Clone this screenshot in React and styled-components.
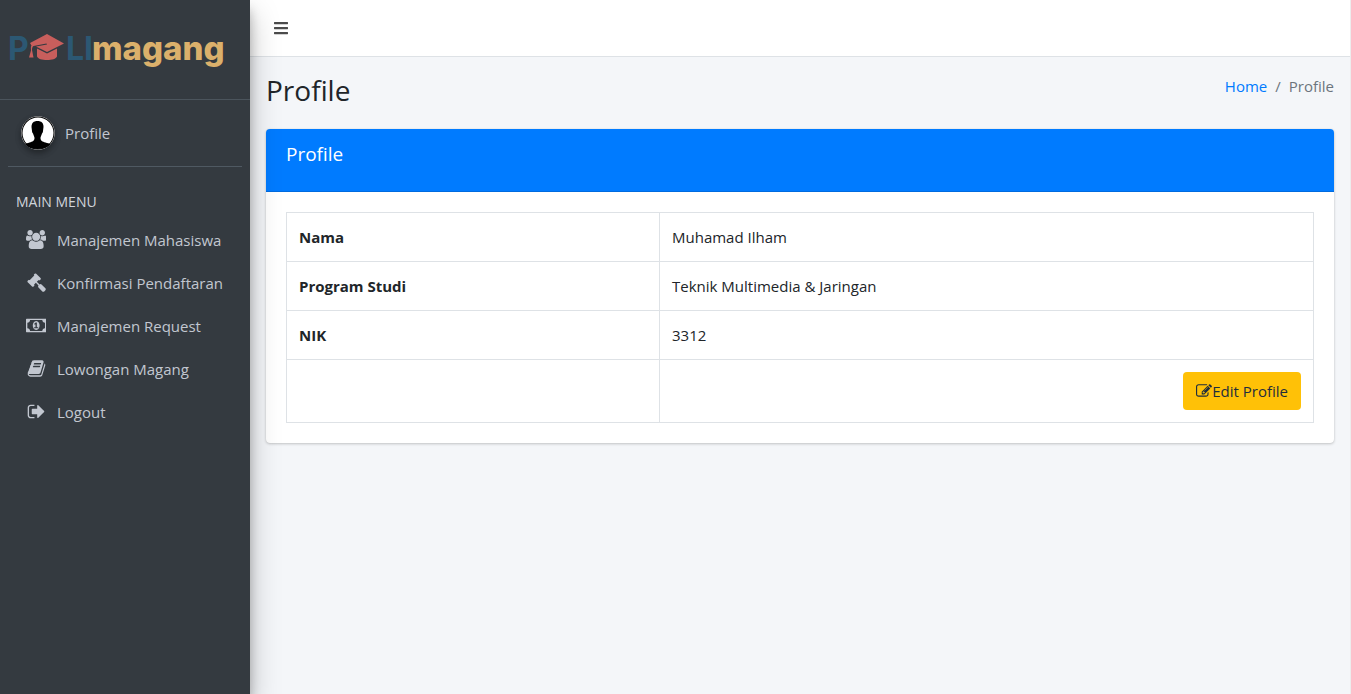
import React from "react";
import styled, { createGlobalStyle } from "styled-components";
import { FaBars } from "react-icons/fa";

const GlobalStyle = createGlobalStyle`
  *, *::before, *::after { box-sizing: border-box; }
  body {
    margin: 0;
    background: #f4f6f9;
    color: #212529;
    font-family: "Open Sans", "Noto Sans", sans-serif;
    font-size: 15px;
    line-height: 24px;
  }
`;

const Shell = styled.div`
  display: flex;
  min-height: 100vh;
  border-right: 1px solid #ededed;
`;

const Sidebar = styled.aside`
  flex: 0 0 250px;
  background: #343a40;
  color: #c2c7d0;
  z-index: 1;
  box-shadow: 0 14px 28px rgba(0, 0, 0, 0.25), 0 10px 10px rgba(0, 0, 0, 0.22);
`;

const Brand = styled.a`
  display: block;
  height: 100px;
  padding: 28px 8px;
  border-bottom: 1px solid #4b545c;
  svg { display: block; }
`;

const UserPanel = styled.a`
  display: flex;
  align-items: center;
  gap: 10px;
  height: 67px;
  margin: 0 8px;
  padding: 0 13px;
  border-bottom: 1px solid #4f5962;
  color: inherit;
  text-decoration: none;
`;

const Avatar = styled.svg`
  width: 34px;
  height: 34px;
  border-radius: 50%;
  box-shadow: 0 3px 6px rgba(0, 0, 0, 0.16), 0 3px 6px rgba(0, 0, 0, 0.23);
`;

const MenuTitle = styled.h2`
  margin: 0;
  padding: 23px 16px 6px;
  font-size: 14px;
  font-weight: 400;
  line-height: 24px;
  color: #d0d4db;
`;

const Menu = styled.ul`
  display: flex;
  flex-direction: column;
  gap: 3px;
  margin: 0;
  padding: 0 8px;
  list-style: none;
`;

const MenuLink = styled.a`
  display: flex;
  align-items: center;
  gap: 8px;
  height: 40px;
  padding: 0 15px;
  color: inherit;
  text-decoration: none;
  white-space: nowrap;
`;

const IconBox = styled.span`
  display: flex;
  justify-content: center;
  width: 26px;
  padding-bottom: 2px;
`;

const Glyph = styled.svg`
  display: block;
  height: ${(p) => p.$size}px;
  fill: currentColor;
`;

const Main = styled.div`
  flex: 1;
  min-width: 0;
`;

const Topbar = styled.header`
  display: flex;
  align-items: center;
  height: 57px;
  padding: 0 8px;
  background: #fff;
  border-bottom: 1px solid #dee2e6;
`;

const Toggle = styled.button`
  display: flex;
  padding: 8px 15px;
  border: 0;
  background: none;
  color: #4b4b4b;
  font-size: 16px;
`;

const PageHead = styled.div`
  display: flex;
  justify-content: space-between;
  padding: 15px 16px 0;
  height: 72px;
`;

const PageTitle = styled.h1`
  margin: 0;
  font-size: 28px;
  font-weight: 400;
  line-height: 36px;
`;

const Crumbs = styled.nav`
  display: flex;
  gap: 8px;
  padding-top: 2px;
  color: #6c757d;
  a { color: #007bff; text-decoration: none; }
`;

const Card = styled.section`
  margin: 0 16px;
  border-radius: 4px;
  background: #fff;
  box-shadow: 0 0 1px rgba(0, 0, 0, 0.125), 0 1px 3px rgba(0, 0, 0, 0.2);
`;

const CardHead = styled.div`
  height: 63px;
  padding: 12px 20px;
  border-bottom: 1px solid rgba(0, 0, 0, 0.125);
  border-radius: 4px 4px 0 0;
  background: #007bff;
  color: #fff;
`;

const CardTitle = styled.h2`
  margin: 0;
  font-size: 19px;
  font-weight: 400;
  line-height: 26px;
`;

const CardBody = styled.div`
  padding: 20px;
`;

const Table = styled.table`
  width: 100%;
  border-collapse: collapse;
  table-layout: fixed;
  th, td {
    padding: 12px;
    border: 1px solid #dee2e6;
    text-align: left;
    vertical-align: top;
  }
  th { width: 373px; font-weight: 700; }
`;

const Actions = styled.div`
  display: flex;
  justify-content: flex-end;
`;

const EditButton = styled.button`
  display: flex;
  align-items: center;
  height: 38px;
  padding: 0 13px;
  border: 0;
  border-radius: 4px;
  background: #ffc107;
  color: #1f2d3d;
  font: inherit;
`;

const icons = {
  users: {
    box: "0 0 1920 1792",
    d: "M593 896q-162 5-265 128h-134q-82 0-138-40.5t-56-118.5q0-353 124-353 6 0 43.5 21t97.5 42.5 119 21.5q67 0 133-23-5 37-5 66 0 139 81 256zm1071 637q0 120-73 189.5t-194 69.5h-874q-121 0-194-69.5t-73-189.5q0-53 3.5-103.5t14-109 26.5-108.5 43-97.5 62-81 85.5-53.5 111.5-20q10 0 43 21.5t73 48 107 48 135 21.5 135-21.5 107-48 73-48 43-21.5q61 0 111.5 20t85.5 53.5 62 81 43 97.5 26.5 108.5 14 109 3.5 103.5zm-1024-1277q0 106-75 181t-181 75-181-75-75-181 75-181 181-75 181 75 75 181zm704 384q0 159-112.5 271.5t-271.5 112.5-271.5-112.5-112.5-271.5 112.5-271.5 271.5-112.5 271.5 112.5 112.5 271.5zm576 225q0 78-56 118.5t-138 40.5h-134q-103-123-265-128 81-117 81-256 0-29-5-66 66 23 133 23 59 0 119-21.5t97.5-42.5 43.5-21q124 0 124 353zm-128-609q0 106-75 181t-181 75-181-75-75-181 75-181 181-75 181 75 75 181z",
  },
  gavel: {
    box: "0 0 1792 1792",
    d: "M1771 1536q0 53-37 90l-107 108q-39 37-91 37-53 0-90-37l-363-364q-38-36-38-90 0-53 43-96l-256-256-126 126q-14 14-34 14t-34-14q2 2 12.5 12t12.5 13 10 11.5 10 13.5 6 13.5 5.5 16.5 1.5 18q0 38-28 68-3 3-16.5 18t-19 20.5-18.5 16.5-22 15.5-22 9-26 4.5q-40 0-68-28l-408-408q-28-28-28-68 0-13 4.5-26t9-22 15.5-22 16.5-18.5 20.5-19 18-16.5q30-28 68-28 10 0 18 1.5t16.5 5.5 13.5 6 13.5 10 11.5 10 13 12.5 12 12.5q-14-14-14-34t14-34l348-348q14-14 34-14t34 14q-2-2-12.5-12t-12.5-13-10-11.5-10-13.5-6-13.5-5.5-16.5-1.5-18q0-38 28-68 3-3 16.5-18t19-20.5 18.5-16.5 22-15.5 22-9 26-4.5q40 0 68 28l408 408q28 28 28 68 0 13-4.5 26t-9 22-15.5 22-16.5 18.5-20.5 19-18 16.5q-30 28-68 28-10 0-18-1.5t-16.5-5.5-13.5-6-13.5-10-11.5-10-13-12.5-12-12.5q14 14 14 34t-14 34l-126 126 256 256q43-43 96-43 52 0 91 37l363 363q37 39 37 91z",
  },
  money: {
    box: "0 0 1920 1792",
    d: "M768 1152h384v-96h-128v-448h-114l-148 137 77 80q42-37 55-57h2v288h-128v96zm512-256q0 70-21 142t-59.5 134-101.5 101-138 39-138-39-101.5-101-59.5-134-21-142 21-142 59.5-134 101.5-101 138-39 138 39 101.5 101 59.5 134 21 142zm512 256v-512q-106 0-181-75t-75-181h-1152q0 106-75 181t-181 75v512q106 0 181 75t75 181h1152q0-106 75-181t181-75zm128-832v1152q0 26-19 45t-45 19h-1792q-26 0-45-19t-19-45v-1152q0-26 19-45t45-19h1792q26 0 45 19t19 45z",
  },
  book: {
    box: "0 0 1792 1792",
    d: "M1703 478q40 57 18 129l-275 906q-19 64-76.5 107.5t-122.5 43.5h-923q-77 0-148.5-53.5t-99.5-131.5q-24-67-2-127 0-4 3-27t4-37q1-8-3-21.5t-3-19.5q2-11 8-21t16.5-23.5 16.5-23.5q23-38 45-91.5t30-91.5q3-10 .5-30t-.5-28q3-11 17-28t17-23q21-36 42-92t25-90q1-9-2.5-32t.5-28q4-13 22-30.5t22-22.5q19-26 42.5-84.5t27.5-96.5q1-8-3-25.5t-2-26.5q2-8 9-18t18-23 17-21q8-12 16.5-30.5t15-35 16-36 19.5-32 26.5-23.5 36-11.5 47.5 5.5l-1 3q38-9 51-9h761q74 0 114 56t18 130l-274 906q-36 119-71.5 153.5t-128.5 34.5h-869q-27 0-38 15-11 16-1 43 24 70 144 70h923q29 0 56-15.5t35-41.5l300-987q7-22 5-57 38 15 59 43zm-1064 2q-4 13 2 22.5t20 9.5h608q13 0 25.5-9.5t16.5-22.5l21-64q4-13-2-22.5t-20-9.5h-608q-13 0-25.5 9.5t-16.5 22.5zm-83 256q-4 13 2 22.5t20 9.5h608q13 0 25.5-9.5t16.5-22.5l21-64q4-13-2-22.5t-20-9.5h-608q-13 0-25.5 9.5t-16.5 22.5z",
  },
  signOut: {
    box: "0 0 1792 1792",
    d: "M704 1440q0 4 1 20t.5 26.5-3 23.5-10 19.5-20.5 6.5h-320q-119 0-203.5-84.5t-84.5-203.5v-704q0-119 84.5-203.5t203.5-84.5h320q13 0 22.5 9.5t9.5 22.5q0 4 1 20t.5 26.5-3 23.5-10 19.5-20.5 6.5h-320q-66 0-113 47t-47 113v704q0 66 47 113t113 47h312l11.5 1 11.5 3 8 5.5 7 9 2 13.5zm928-544q0 26-19 45l-544 544q-19 19-45 19t-45-19-19-45v-288h-448q-26 0-45-19t-19-45v-384q0-26 19-45t45-19h448v-288q0-26 19-45t45-19 45 19l544 544q19 19 19 45z",
  },
  edit: {
    box: "0 0 1792 1792",
    d: "M888 1184l116-116-152-152-116 116v56h96v96h56zm440-720q-16-16-33 1l-350 350q-17 17-1 33t33-1l350-350q17-17 1-33zm80 594v190q0 119-84.5 203.5t-203.5 84.5h-832q-119 0-203.5-84.5t-84.5-203.5v-832q0-119 84.5-203.5t203.5-84.5h832q63 0 117 25 15 7 18 23 3 17-9 29l-49 49q-14 14-32 8-23-6-45-6h-832q-66 0-113 47t-47 113v832q0 66 47 113t113 47h832q66 0 113-47t47-113v-126q0-13 9-22l64-64q15-15 35-7t20 29zm-96-738l288 288-672 672h-288v-288zm444 132l-92 92-288-288 92-92q28-28 68-28t68 28l152 152q28 28 28 68t-28 68z",
  },
};

function Icon({ name, size = 19 }) {
  return (
    <Glyph viewBox={icons[name].box} $size={size} aria-hidden="true">
      <path d={icons[name].d} />
    </Glyph>
  );
}

function Logo() {
  return (
    <svg width="226" height="44" viewBox="0 0 226 44" role="img" aria-label="POLImagang">
      <g fontFamily="Inter, sans-serif" fontSize="32">
        <g fill="#2c5873" fontWeight="700">
          <text x="0" y="32">P</text>
          <text x="58" y="32">LI</text>
        </g>
        <text x="84" y="32" fill="#dbb06b" fontSize="33" fontWeight="800">magang</text>
      </g>
      <g fill="#c85e5c">
        <path d="M22 15 39 6l17 9.500-17 8.500-11-5.500 11-2-.500-1-13 2.500c-1 .500-1.500 2-1.500 4l1.500 7.500h-4.500l2-7c0-2-.500-4 .500-5z" />
        <path d="M29 20.500l10 5 10-5v8c-1 2.500-5 3.500-10 3.500s-9-1-10-3.500z" />
      </g>
    </svg>
  );
}

const menu = [
  ["users", "Manajemen Mahasiswa"],
  ["gavel", "Konfirmasi Pendaftaran"],
  ["money", "Manajemen Request"],
  ["book", "Lowongan Magang"],
  ["signOut", "Logout"],
];

const rows = [
  ["Nama", "Muhamad Ilham"],
  ["Program Studi", "Teknik Multimedia & Jaringan"],
  ["NIK", "3312"],
];

export default function App() {
  return (
    <>
      <GlobalStyle />
      <Shell>
        <Sidebar>
          <Brand href="#"><Logo /></Brand>
          <UserPanel href="#">
            <Avatar viewBox="0 0 34 34" aria-hidden="true">
              <circle cx="17" cy="17" r="17" fill="#ccc" />
              <circle cx="17" cy="17" r="16.500" fill="#000" />
              <circle cx="17" cy="17" r="15.500" fill="#fff" />
              <path d="M16.500 5c-4 0-6 2-6 6l.500 4c0 1 .500 2 1 2.500.500 2 1.500 3 1.500 4.500 0 3-2 3.500-5 4.500-2 .500-3.500 1-4.500 2 3 3 7.500 4.500 12.500 4.500s10-1.500 13-4.500c-1-1-3-1.500-5-2-3-1-5-1.500-5-4.500 0-1.500 1-2.500 1.500-4.500.500-.500 1-1.500 1-2.500l.500-4c0-4-2-6-6-6z" />
            </Avatar>
            Profile
          </UserPanel>
          <MenuTitle>MAIN MENU</MenuTitle>
          <Menu>
            {menu.map(([icon, label]) => (
              <li key={label}>
                <MenuLink href="#">
                  <IconBox><Icon name={icon} /></IconBox>
                  {label}
                </MenuLink>
              </li>
            ))}
          </Menu>
        </Sidebar>
        <Main>
          <Topbar>
            <Toggle aria-label="Toggle menu"><FaBars /></Toggle>
          </Topbar>
          <PageHead>
            <PageTitle>Profile</PageTitle>
            <Crumbs aria-label="Breadcrumb">
              <a href="#">Home</a>
              <span>/</span>
              <span>Profile</span>
            </Crumbs>
          </PageHead>
          <Card>
            <CardHead><CardTitle>Profile</CardTitle></CardHead>
            <CardBody>
              <Table>
                <tbody>
                  {rows.map(([label, value]) => (
                    <tr key={label}>
                      <th scope="row">{label}</th>
                      <td>{value}</td>
                    </tr>
                  ))}
                  <tr>
                    <td />
                    <td>
                      <Actions>
                        <EditButton><Icon name="edit" size={16} />Edit Profile</EditButton>
                      </Actions>
                    </td>
                  </tr>
                </tbody>
              </Table>
            </CardBody>
          </Card>
        </Main>
      </Shell>
    </>
  );
}
